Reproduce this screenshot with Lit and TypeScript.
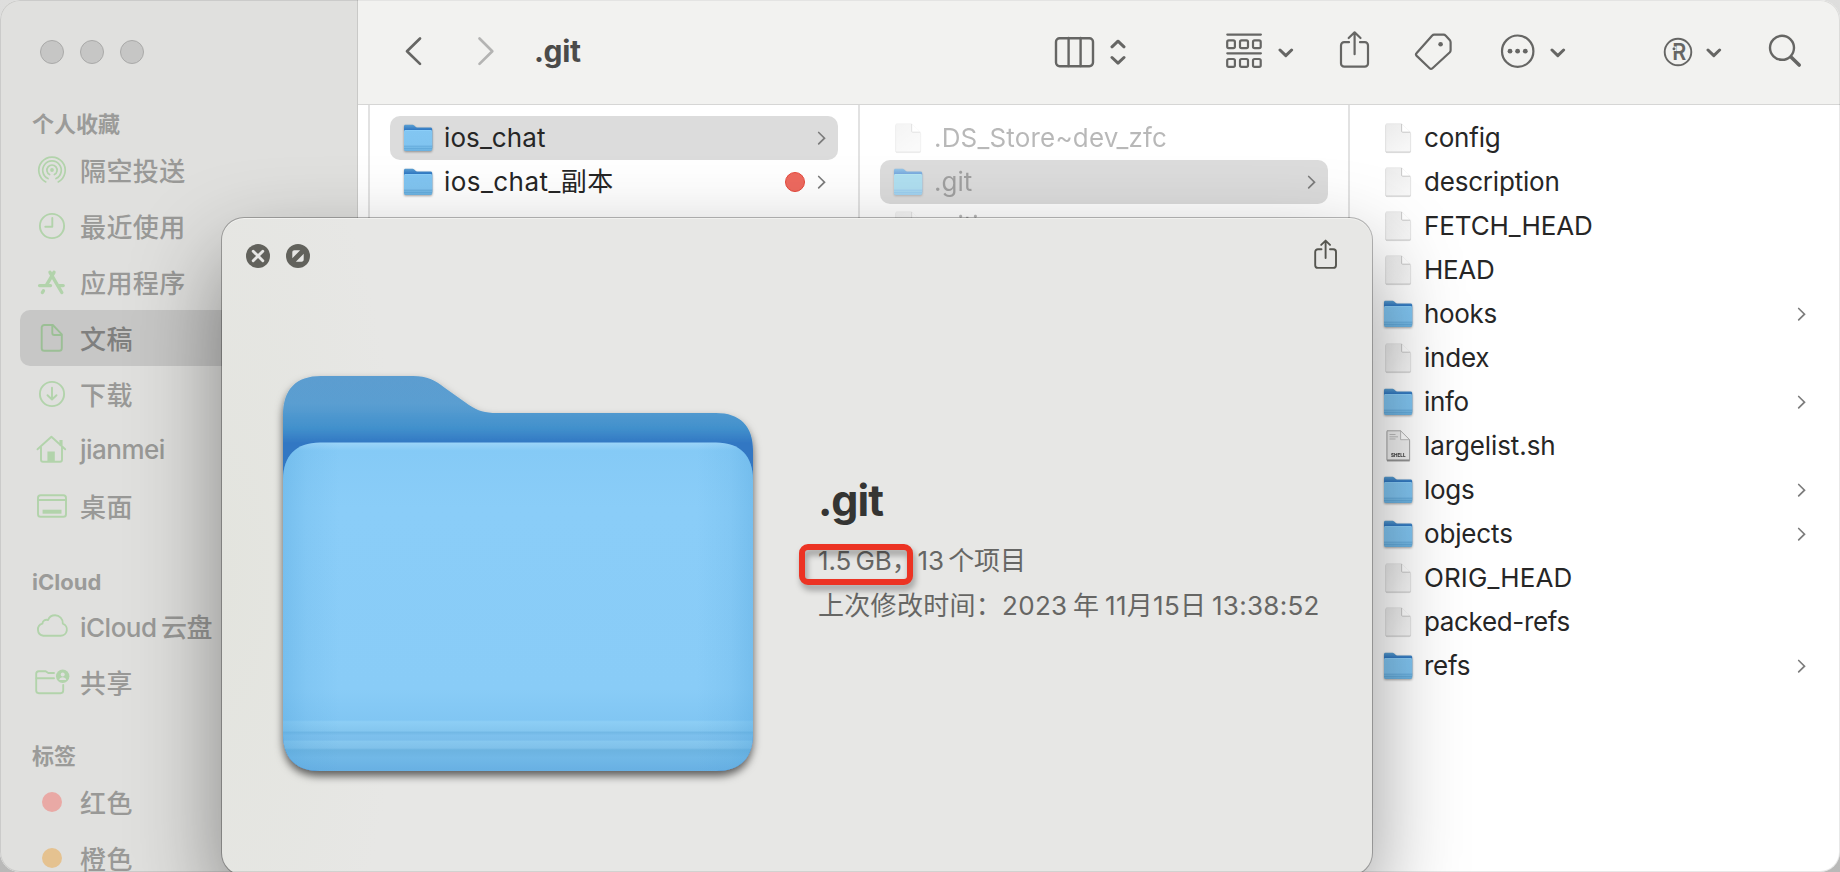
import { LitElement, html, css, svg, nothing } from "lit";
import { customElement, property } from "lit/decorators.js";
import { classMap } from "lit/directives/class-map.js";

const symbol = (w: number, h: number, body: unknown) =>
  html`<svg width=${w} height=${h} viewBox="0 0 ${w} ${h}" fill="none" stroke="currentColor" stroke-linecap="round" stroke-linejoin="round">${body}</svg>`;

/* Sidebar symbols, 36 x 36 */
const side: Record<string, unknown> = {
  airdrop: svg`<g stroke-width="1.7"><circle cx="18" cy="18" r="1.9" fill="currentColor" stroke="none"/>
    <path d="M15.6 22.6a5.1 5.1 0 1 1 4.8 0"/><path d="M14 26.6a9.3 9.3 0 1 1 8 0"/><path d="M11.8 29.9a13.2 13.2 0 1 1 12.4 0"/></g>`,
  clock: svg`<g stroke-width="1.9"><circle cx="18" cy="18" r="12.1"/><path d="M18.3 10v8.8h-7"/></g>`,
  apps: svg`<g stroke-width="3.4"><path d="M20 8.300L12.600 20.800M9.400 26.800L8.400 28.500"/><path d="M16 8.300L27.800 28.500"/><path d="M5.600 21.600H16.500M24.300 21.600h4.900"/></g>`,
  doc: svg`<g stroke-width="1.9"><path d="M10.300 5h8.500l9 9.300V28.200a2.600 2.600 0 0 1-2.600 2.600H10.300a2.600 2.600 0 0 1-2.600-2.600V7.600A2.600 2.600 0 0 1 10.300 5z"/><path d="M18.300 5.500V13a2 2 0 0 0 2 2h7"/></g>`,
  download: svg`<g stroke-width="1.9"><circle cx="18" cy="18" r="12.1"/><path d="M18 11.700v11.600M13.500 19.200l4.500 4.300 4.500-4.300"/></g>`,
  home: svg`<g stroke-width="1.9"><path d="M3.500 17.300L17.400 4.800l13.800 12.500"/><path d="M7 15.500v12.300a2 2 0 0 0 2 2h17a2 2 0 0 0 2-2V15.500"/><path d="M13.400 29.500v-10h7.400v10z" fill="currentColor" stroke="none"/><path d="M27 8v5.500" stroke-width="3.200" stroke-linecap="butt"/></g>`,
  desktop: svg`<g stroke-width="1.900"><rect x="4" y="7.300" width="28" height="21.500" rx="2.600"/><path d="M4 12h28"/><path d="M8.600 23.700h18.900" stroke-width="4" stroke-linecap="butt"/></g>`,
  cloud: svg`<path stroke-width="1.900" d="M9.400 27.800h17.200a6.300 6.300 0 0 0 2.200-12.200c.2-5-3.400-8.300-7.700-8.300-3.300 0-5.900 1.800-7 4.700-3.100-1-5.600.9-5.700 3.700A6.200 6.200 0 0 0 9.400 27.800z"/>`,
  shared: svg`<g stroke-width="1.900"><path d="M20 9h-5.700l-2.600-1.800H4.800A2.600 2.600 0 0 0 2.200 9.800v16.800a2.600 2.600 0 0 0 2.600 2.600h21.800a2.600 2.600 0 0 0 2.600-2.600V21"/><path d="M2.500 14.300h17.500"/></g><circle cx="28.700" cy="12.200" r="6.700" fill="currentColor" stroke="none"/><circle cx="28.700" cy="10.400" r="2" fill="#e0e0de" stroke="none"/><path d="M25.200 15.900c.4-3.400 6.600-3.400 7 0z" fill="#e0e0de" stroke="none"/>`,
};

/* Toolbar symbols, 44 high */
const chevronDown = symbol(16, 44, svg`<path d="M2 20l5.800 5.600L13.600 20" stroke-width="3"/>`);
const bar: Record<string, unknown> = {
  back: symbol(20, 44, svg`<path d="M16 8.500L3 21.200l13 12.700" stroke-width="2.700"/>`),
  forward: symbol(20, 44, svg`<path d="M3.500 8.500l12.800 12.700-12.800 12.700" stroke-width="2.700"/>`),
  columns: symbol(41, 44, svg`<g stroke-width="2.400"><rect x="2" y="8.200" width="37" height="28" rx="3.600"/><path d="M14.600 8v28M26.600 8v28"/></g>`),
  updown: symbol(16, 44, svg`<path d="M2 16.800l6-5.600 6 5.600M2 27.500l6 5.600 6-5.600" stroke-width="3"/>`),
  group: symbol(38, 44, svg`<g stroke-width="2.200"><path d="M2.300 4.600h33.600M2.300 23.300h33.600"/>
    <rect x="2.200" y="10.300" width="7.700" height="7.800" rx="1.600"/><rect x="15" y="10.300" width="8" height="7.800" rx="1.600"/><rect x="28" y="10.300" width="7.700" height="7.800" rx="1.600"/>
    <rect x="2.200" y="29" width="7.700" height="7.800" rx="1.600"/><rect x="15" y="29" width="8" height="7.800" rx="1.600"/><rect x="28" y="29" width="7.700" height="7.800" rx="1.600"/></g>`),
  share: symbol(31, 44, svg`<g stroke-width="2.200"><path d="M10 12.200H5.200A3.200 3.200 0 0 0 2 15.400v18.100a3.200 3.200 0 0 0 3.200 3.200h20.600a3.200 3.200 0 0 0 3.200-3.200V15.400a3.200 3.200 0 0 0-3.200-3.200H21"/><path d="M15.600 24.200V2.500M9.700 8l5.900-5.700L21.500 8"/></g>`),
  tag: symbol(38, 44, svg`<path stroke-width="2.200" d="M20.300 4.700h9.200c1 0 1.600.3 2.300 1l3.900 4.300c.6.700.9 1.300.9 2.200v8c0 1-.4 1.700-1 2.300L18.500 38.200c-1.100 1-1.900 1-2.900 0L2.700 25.900c-1-1-1-1.900 0-2.900L18 5.700c.7-.7 1.300-1 2.300-1z"/><circle cx="26.600" cy="14.300" r="2.300" fill="currentColor" stroke="none"/>`),
  more: symbol(35, 44, svg`<circle cx="17.700" cy="21.200" r="15.700" stroke-width="2.200"/><g fill="currentColor" stroke="none"><circle cx="10" cy="21.200" r="2.400"/><circle cx="17.600" cy="21.200" r="2.400"/><circle cx="25.300" cy="21.200" r="2.400"/></g>`),
  registered: symbol(30, 44, svg`<circle cx="15" cy="22" r="13.300" stroke-width="1.900"/><g fill="currentColor" stroke="none"><text x="9.200" y="30.300" font-size="23" font-weight="600" textLength="14" lengthAdjust="spacingAndGlyphs">R</text><path d="M8.500 16.500h5v4.500h-5z" fill="#f2f2f0"/><circle cx="11" cy="18.800" r="1.500"/></g>`),
  search: symbol(34, 44, svg`<circle cx="14" cy="17.800" r="12" stroke-width="2.400"/><path d="M23.500 27.500l7.700 7.500" stroke-width="3.600"/>`),
};

const smallFolder = html`<svg class="folder" width="32" height="32" viewBox="0 0 32 32">
  <defs>
    <linearGradient id="fb" x1="0" y1="0" x2="0" y2="1"><stop offset="0" stop-color="#5a9fd2"/><stop offset=".22" stop-color="#2f77c2"/></linearGradient>
    <linearGradient id="ff" x1="0" y1="0" x2="0" y2="1"><stop offset="0" stop-color="#90d2fb"/><stop offset=".06" stop-color="#82c6f2"/><stop offset=".74" stop-color="#80c4f0"/><stop offset="1" stop-color="#6ab0df"/></linearGradient>
  </defs>
  <path d="M2 4.300c0-1 .6-1.500 1.500-1.500h7.300c1.500 0 2.400 2.700 4.200 2.700h13.500c1 0 1.700.7 1.700 1.700V26H2z" fill="url(#fb)"/>
  <path d="M2 9.600c0-1 .6-1.500 1.500-1.500h25c1 0 1.700.6 1.700 1.500v17.700c0 1-.6 1.600-1.600 1.600H3.500c-1 0-1.500-.6-1.500-1.600z" fill="url(#ff)"/>
  <path d="M2 24.200h28.200M2 26.400h28.200" stroke="#5ea5d6" stroke-width=".8"/>
</svg>`;

const smallFile = html`<svg class="file" width="32" height="32" viewBox="0 0 32 32">
  <defs><linearGradient id="pg" x1="0" y1="0" x2=".7" y2="1"><stop offset="0" stop-color="#ebebeb"/><stop offset="1" stop-color="#f7f7f7"/></linearGradient></defs>
  <path d="M5 1.700h14.600L28.600 10.500V28.300a1.300 1.300 0 0 1-1.300 1.300H5a1.300 1.300 0 0 1-1.300-1.300V3A1.300 1.300 0 0 1 5 1.700z" fill="url(#pg)" stroke="#e2e2e2" stroke-width=".6"/>
  <path d="M19.600 1.700v7.500a1 1 0 0 0 1 1h8z" fill="#fff"/>
  <path d="M19.600 2v7.200a1 1 0 0 0 1 1h7.600" fill="none" stroke="#c2c2c2" stroke-width=".9"/>
</svg>`;

const shellFile = html`<svg class="file" width="32" height="32" viewBox="0 0 32 32">
  <path d="M5 .8h13.600l9 8.900V30H5z" fill="#f0f0f0" stroke="#a9a9a9" stroke-width="1"/>
  <path d="M18.600.8v8.900h9z" fill="#fff" stroke="#b5b5b5" stroke-width=".9"/>
  <path d="M7.500 4.500h6M7.500 6.800h8.500M7.500 9h6" stroke="#bdbdbd" stroke-width="1"/>
  <text x="9" y="26.600" font-size="4.600" font-weight="800" fill="#444" textLength="14.500">SHELL</text>
  <path d="M5 30.300h22.600" stroke="#8d8d8d" stroke-width="1"/>
</svg>`;

interface Entry {
  name: string;
  kind: "folder" | "file" | "shell";
  fit?: number;
  selected?: boolean;
  faded?: boolean;
  tag?: boolean;
}

@customElement("finder-row")
class FinderRow extends LitElement {
  @property({ attribute: false }) entry!: Entry;

  static styles = css`
    :host { display: block; }
    .row { display: flex; align-items: center; box-sizing: border-box; height: 44px; padding: 0 11px 1px 12px; border-radius: 10px; color: #262626; font-size: 26px; line-height: 42px; white-space: nowrap; }
    .selected { background: #dcdcdc; }
    .folder { filter: drop-shadow(0 1px 1px rgba(0, 0, 0, 0.35)); }
    .file { filter: drop-shadow(0 1px 0.6px rgba(0, 0, 0, 0.2)); }
    svg { flex: none; display: block; }
    .name { flex: 1; padding-left: 10px; }
    .faded .file { opacity: 0.5; }
    .faded .folder { opacity: 0.6; filter: brightness(1.15) drop-shadow(0 1px 1px rgba(0, 0, 0, 0.3)); }
    .faded .name { opacity: 0.32; }
    .tag { width: 18px; height: 18px; border-radius: 50%; background: #ee6a5f; border: 1px solid #e5493c; margin-right: 12px; }
    .chevron { color: #7c7c7c; }
  `;

  render() {
    const e = this.entry;
    const icon = e.kind === "folder" ? smallFolder : e.kind === "shell" ? shellFile : smallFile;
    return html`<div class="row ${classMap({ selected: !!e.selected, faded: !!e.faded })}">
      ${icon}
      <span class="name"><span style="letter-spacing:${e.fit ?? 0}px">${e.name}</span></span>
      ${e.tag ? html`<span class="tag"></span>` : nothing}
      ${e.kind === "folder"
        ? html`<svg class="chevron" width="10" height="16" viewBox="0 0 10 16" fill="none" stroke="currentColor" stroke-width="1.700" stroke-linecap="round"><path d="M1.700 2.500L7.500 8.200 1.700 13.900"/></svg>`
        : nothing}
    </div>`;
  }
}

const columns: Entry[][] = [
  [
    { name: "ios_chat", kind: "folder", selected: true, fit: 0.1 },
    { name: "ios_chat_副本", kind: "folder", tag: true, fit: 0.45 },
  ],
  [
    { name: ".DS_Store~dev_zfc", kind: "file", faded: true, fit: 0.18 },
    { name: ".git", kind: "folder", selected: true, faded: true },
    { name: ".gitignore", kind: "file", faded: true },
  ],
  [
    { name: "config", kind: "file", fit: -0.2 },
    { name: "description", kind: "file", fit: -0.2 },
    { name: "FETCH_HEAD", kind: "file", fit: -0.1 },
    { name: "HEAD", kind: "file", fit: -0.3 },
    { name: "hooks", kind: "folder", fit: -0.35 },
    { name: "index", kind: "file", fit: -0.2 },
    { name: "info", kind: "folder", fit: -0.3 },
    { name: "largelist.sh", kind: "shell", fit: -0.1 },
    { name: "logs", kind: "folder", fit: -0.3 },
    { name: "objects", kind: "folder", fit: -0.15 },
    { name: "ORIG_HEAD", kind: "file", fit: 0.1 },
    { name: "packed-refs", kind: "file", fit: -0.35 },
    { name: "refs", kind: "folder", fit: -0.3 },
  ],
];

const sections = [
  {
    title: "个人收藏",
    items: [
      ["airdrop", "隔空投送"], ["clock", "最近使用"], ["apps", "应用程序"], ["doc", "文稿"],
      ["download", "下载"], ["home", "jianmei"], ["desktop", "桌面"],
    ],
  },
  { title: "iCloud", items: [["cloud", "iCloud 云盘"], ["shared", "共享"]] },
  { title: "标签", items: [["red", "红色"], ["orange", "橙色"]] },
];

@customElement("finder-sidebar")
class FinderSidebar extends LitElement {
  static styles = css`
    :host { display: block; box-sizing: border-box; width: 358px; padding: 0 20px; background: #e0e0de; border-right: 1px solid #c9c9c7; overflow: hidden; }
    .lights { display: flex; gap: 16px; height: 78px; padding: 40px 0 0 20px; box-sizing: border-box; }
    .lights i { width: 22px; height: 22px; border-radius: 50%; background: #c6c6c5; border: 1px solid #aaaaa9; }
    h2 { box-sizing: border-box; margin: 0; padding: 29px 0 0 12px; height: 64px; font-size: 22px; line-height: 35px; font-weight: 700; color: #9b9b99; }
    h2.latin { padding-top: 31px; font-weight: 650; }
    .item { display: flex; align-items: center; height: 56px; padding-left: 14px; border-radius: 10px; font-size: 26px; font-weight: 500; white-space: nowrap; color: #999997; }
    .item span { padding: 0 0 2px 10px; letter-spacing: 0.4px; }
    .item .latin { letter-spacing: -0.5px; word-spacing: -2px; }
    .item svg { display: block; color: #b2d3ab; }
    .active { background: #c7c7c6; color: #7f7f7e; }
    .active svg { color: #9bbf95; }
    .dot { width: 20px; height: 20px; margin: 0 8px; border-radius: 50%; }
    .red { background: #e9a9a5; }
    .orange { background: #e5c290; }
  `;

  render() {
    const latin = (s: string) => classMap({ latin: /^[a-z]/i.test(s) });
    return html`
      <div class="lights"><i></i><i></i><i></i></div>
      ${sections.map(
        (s) => html`<h2 class=${latin(s.title)}>${s.title}</h2>
          ${s.items.map(
            ([icon, label]) => html`<div class="item ${classMap({ active: icon === "doc" })}">
              ${side[icon] ? symbol(36, 36, side[icon]) : html`<i class="dot ${icon}"></i>`}
              <span class=${latin(label)}>${label}</span>
            </div>`
          )}`
      )}
    `;
  }
}

@customElement("preview-panel")
class PreviewPanel extends LitElement {
  static styles = css`
    :host { display: block; }
    .panel { box-sizing: border-box; width: 1150px; height: 657px; border-radius: 22px; background: radial-gradient(ellipse 180px 520px at 0 55%, #e3e4de, rgba(227, 228, 222, 0)), #e7e7e5; box-shadow: 0 0 0 1px rgba(0, 0, 0, 0.27), 0 38px 90px rgba(0, 0, 0, 0.42), inset 0 1px 0 #f1f1ef; }
    header { display: flex; align-items: center; height: 76px; padding: 0 34px 0 24px; gap: 16px; color: #55554f; }
    header svg { display: block; }
    header .send { margin-bottom: 5px; }
    .grow { flex: 1; }
    .body { display: flex; align-items: flex-start; }
    .big { display: block; width: 510px; height: 460px; margin: 64px 0 0 41px; }
    .info { padding-top: 174px; margin-left: 45px; color: #666664; font-size: 26px; white-space: nowrap; font-weight: 400; }
    h1 { margin: 0 0 6px; height: 64px; line-height: 64px; font-size: 43px; font-weight: 700; color: #353533; letter-spacing: -1px; }
    p { margin: 0; height: 45px; line-height: 45px; }
    .size { position: relative; letter-spacing: -0.1px; word-spacing: -3px; }
    .date { letter-spacing: 0.3px; word-spacing: -2px; }
    .mark { position: absolute; left: -19px; top: 6px; box-sizing: border-box; width: 114px; height: 41px; border: 6px solid #ec3323; border-radius: 9px; filter: drop-shadow(2px 5px 3px rgba(0, 0, 0, 0.35)); }
  `;

  render() {
    return html`<div class="panel">
      <header>
        <svg width="24" height="24" viewBox="0 0 24 24"><circle cx="12" cy="12" r="12" fill="#62625c"/><path d="M7.200 7.200l9.600 9.600M16.800 7.200l-9.600 9.600" stroke="#e7e7e5" stroke-width="2.900" stroke-linecap="round"/></svg>
        <svg width="24" height="24" viewBox="0 0 24 24"><circle cx="12" cy="12" r="12" fill="#62625c"/><path d="M6.300 14.200V8.400c0-1.300.8-2.100 2.100-2.100h5.800zM17.700 9.800v5.800c0 1.300-.8 2.100-2.100 2.100H9.800z" fill="#e7e7e5"/></svg>
        <span class="grow"></span>
        <svg class="send" width="24" height="32" viewBox="0 0 24 32" fill="none" stroke="currentColor" stroke-width="1.900" stroke-linecap="round" stroke-linejoin="round"><path d="M7.500 11.200H3.900A2.700 2.700 0 0 0 1.200 13.900v13.300a2.700 2.700 0 0 0 2.700 2.700h15.400a2.700 2.700 0 0 0 2.700-2.700V13.900a2.700 2.700 0 0 0-2.700-2.700H16"/><path d="M11.600 20V2.800M7.200 6.900l4.400-4.300L16 6.900"/></svg>
      </header>
      <div class="body">
        <svg class="big" viewBox="263 358 510 460">
          <defs>
            <linearGradient id="back" x1="0" y1="376" x2="0" y2="446" gradientUnits="userSpaceOnUse"><stop offset="0" stop-color="#5b9dd0"/><stop offset=".4" stop-color="#5a9ed1"/><stop offset=".75" stop-color="#4190cc"/><stop offset=".96" stop-color="#3277c3"/></linearGradient>
            <linearGradient id="front" x1="0" y1="442.500" x2="0" y2="771" gradientUnits="userSpaceOnUse"><stop offset="0" stop-color="#9cd4f8"/><stop offset=".025" stop-color="#85caf6"/><stop offset=".2" stop-color="#8acdf8"/><stop offset=".75" stop-color="#89ccf7"/><stop offset=".845" stop-color="#81c6f3"/><stop offset=".85" stop-color="#8dcef5"/><stop offset=".878" stop-color="#84c6ef"/><stop offset=".882" stop-color="#72b8e5"/><stop offset=".892" stop-color="#7dc0ed"/><stop offset=".906" stop-color="#7bbeeb"/><stop offset=".909" stop-color="#87c8ef"/><stop offset=".93" stop-color="#80c1ea"/><stop offset=".936" stop-color="#6cb3e0"/><stop offset=".96" stop-color="#71b8e7"/><stop offset="1" stop-color="#68b0e3"/></linearGradient>
            <linearGradient id="sides"><stop offset="0" stop-color="#4fa2da" stop-opacity=".34"/><stop offset=".05" stop-color="#4fa2da" stop-opacity=".13"/><stop offset=".12" stop-color="#4fa2da" stop-opacity="0"/><stop offset=".88" stop-color="#4fa2da" stop-opacity="0"/><stop offset=".95" stop-color="#4fa2da" stop-opacity=".13"/><stop offset="1" stop-color="#4fa2da" stop-opacity=".34"/></linearGradient>
            <filter id="drop" x="-10%" y="-10%" width="120%" height="125%"><feDropShadow dx="0" dy="5" stdDeviation="4.500" flood-color="#000" flood-opacity=".6"/></filter>
          </defs>
          <path filter="url(#drop)" d="M283 416c0-27 13-40 38-40h92c14 0 22 4 32 12l24 17c9 6 16 8 28 8h219c24 0 37 13 37 37v284c0 24-13 37-37 37H320c-24 0-37-13-37-37z" fill="url(#back)"/>
          <path d="M283 480c0-24 13-37.500 37-37.500h396c24 0 37 13.500 37 37.500v254c0 24-13 37-37 37H320c-24 0-37-13-37-37z" fill="url(#front)"/>
          <path d="M283 480c0-24 13-37.500 37-37.500h396c24 0 37 13.500 37 37.500v254c0 24-13 37-37 37H320c-24 0-37-13-37-37z" fill="url(#sides)"/>
        </svg>
        <div class="info">
          <h1>.git</h1>
          <p class="size">1.5 GB，13 个项目<span class="mark"></span></p>
          <p class="date">上次修改时间：2023 年 11月15日 13:38:52</p>
        </div>
      </div>
    </div>`;
  }
}

@customElement("app-root")
class AppRoot extends LitElement {
  static styles = css`
    :host { display: block; position: relative; width: 1840px; height: 872px; overflow: hidden; background: linear-gradient(#dededd, #b9b9b8); font-family: Inter, "Noto Sans CJK SC", sans-serif; }
    .window { display: flex; height: 872px; border-radius: 20px; overflow: hidden; background: #fff; }
    .main { flex: 1; display: flex; flex-direction: column; min-width: 0; }
    .toolbar { display: flex; align-items: center; height: 104px; box-sizing: border-box; padding: 0 38px 2px 46px; background: #f2f2f0; border-top: 1px solid #fbfbfa; color: #666664; }
    .toolbar svg { display: block; }
    .set { display: flex; gap: 15px; }
    .nav { gap: 52px; }
    .title { margin-left: 38px; padding-bottom: 1px; font-size: 30px; font-weight: 700; color: #4b4b4a; letter-spacing: -0.400px; flex: 1; }
    .dim { color: #b4b4b3; }
    .view { gap: 15px; margin-right: 99px; }
    .arrange { margin-right: 45px; }
    .share { margin-right: 44px; }
    .tag { margin-right: 48px; }
    .more { margin-right: 97px; }
    .plugin { gap: 13px; margin-right: 46px; }
    .columns { flex: 1; display: grid; grid-template-columns: 10px 490px 490px 490px; border-top: 1px solid #d6d6d5; }
    .column { box-sizing: border-box; border-left: 2px solid #e2e2e2; padding: 11px 20px 0; }
    .preview { position: absolute; left: 222px; top: 218px; }
    .rim { position: absolute; inset: 0; border-radius: 20px; box-shadow: inset 0 0 0 1px rgba(0, 0, 0, 0.09); pointer-events: none; }
  `;

  render() {
    return html`
      <div class="window">
        <finder-sidebar></finder-sidebar>
        <div class="main">
          <div class="toolbar">
            <div class="set nav">${bar.back}<span class="dim">${bar.forward}</span></div>
            <div class="title">.git</div>
            <div class="set view">${bar.columns}${bar.updown}</div>
            <div class="set arrange">${bar.group}${chevronDown}</div>
            <div class="share">${bar.share}</div>
            <div class="tag">${bar.tag}</div>
            <div class="set more">${bar.more}${chevronDown}</div>
            <div class="set plugin">${bar.registered}${chevronDown}</div>
            ${bar.search}
          </div>
          <div class="columns">
            <div></div>
            ${columns.map((c) => html`<div class="column">${c.map((e) => html`<finder-row .entry=${e}></finder-row>`)}</div>`)}
          </div>
        </div>
      </div>
      <preview-panel class="preview"></preview-panel>
      <div class="rim"></div>
    `;
  }
}
